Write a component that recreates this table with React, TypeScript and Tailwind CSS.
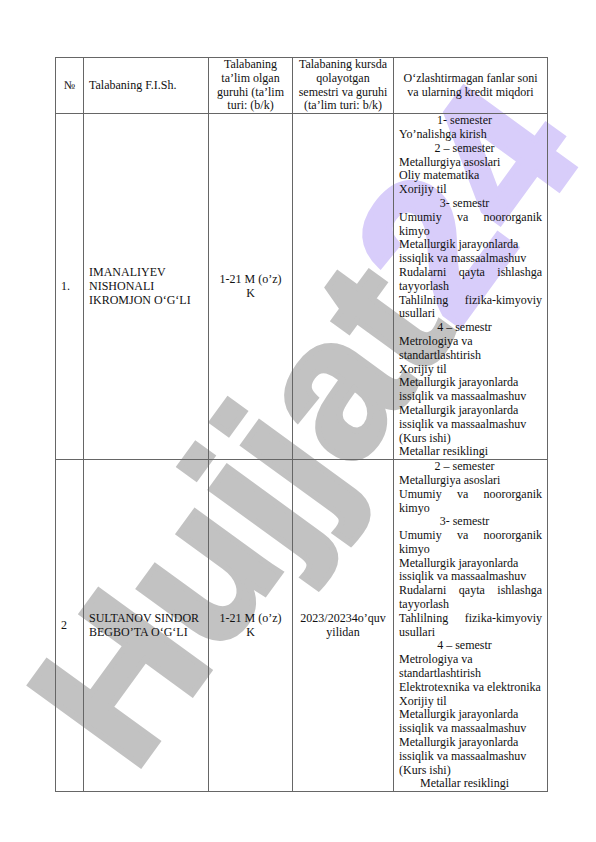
type Line = { t: string; k: "c" | "l" | "j" };

const row1: Line[] = [
  { t: "1- semester", k: "c" },
  { t: "Yo’nalishga kirish", k: "l" },
  { t: "2 – semester", k: "c" },
  { t: "Metallurgiya asoslari", k: "l" },
  { t: "Oliy matematika", k: "l" },
  { t: "Xorijiy til", k: "l" },
  { t: "3- semestr", k: "c" },
  { t: "Umumiy va noororganik", k: "j" },
  { t: "kimyo", k: "l" },
  { t: "Metallurgik jarayonlarda", k: "l" },
  { t: "issiqlik va massaalmashuv", k: "l" },
  { t: "Rudalarni qayta ishlashga", k: "j" },
  { t: "tayyorlash", k: "l" },
  { t: "Tahlilning fizika-kimyoviy", k: "j" },
  { t: "usullari", k: "l" },
  { t: "4 – semestr", k: "c" },
  { t: "Metrologiya va", k: "l" },
  { t: "standartlashtirish", k: "l" },
  { t: "Xorijiy til", k: "l" },
  { t: "Metallurgik jarayonlarda", k: "l" },
  { t: "issiqlik va massaalmashuv", k: "l" },
  { t: "Metallurgik jarayonlarda", k: "l" },
  { t: "issiqlik va massaalmashuv", k: "l" },
  { t: "(Kurs ishi)", k: "l" },
  { t: "Metallar resiklingi", k: "l" },
];

const row2: Line[] = [
  { t: "2 – semester", k: "c" },
  { t: "Metallurgiya asoslari", k: "l" },
  { t: "Umumiy va noororganik", k: "j" },
  { t: "kimyo", k: "l" },
  { t: "3- semestr", k: "c" },
  { t: "Umumiy va noororganik", k: "j" },
  { t: "kimyo", k: "l" },
  { t: "Metallurgik jarayonlarda", k: "l" },
  { t: "issiqlik va massaalmashuv", k: "l" },
  { t: "Rudalarni qayta ishlashga", k: "j" },
  { t: "tayyorlash", k: "l" },
  { t: "Tahlilning fizika-kimyoviy", k: "j" },
  { t: "usullari", k: "l" },
  { t: "4 – semestr", k: "c" },
  { t: "Metrologiya va", k: "l" },
  { t: "standartlashtirish", k: "l" },
  { t: "Elektrotexnika va elektronika", k: "l" },
  { t: "Xorijiy til", k: "l" },
  { t: "Metallurgik jarayonlarda", k: "l" },
  { t: "issiqlik va massaalmashuv", k: "l" },
  { t: "Metallurgik jarayonlarda", k: "l" },
  { t: "issiqlik va massaalmashuv", k: "l" },
  { t: "(Kurs ishi)", k: "l" },
  { t: "Metallar resiklingi", k: "c" },
];

const Subjects = ({ lines }: { lines: Line[] }) => (
  <div className="flex flex-col">
    {lines.map((l, i) =>
      l.k === "j" ? (
        <div key={i} className="flex justify-between whitespace-nowrap">
          {l.t.split(" ").map((w, j) => (
            <span key={j}>{w}</span>
          ))}
        </div>
      ) : (
        <div
          key={i}
          className={
            l.k === "c"
              ? "text-center pr-3 whitespace-nowrap"
              : "text-left whitespace-nowrap"
          }
        >
          {l.t}
        </div>
      )
    )}
  </div>
);

const cell = "border border-[#666] px-[5px] py-0 align-middle";

const App = () => {
  return (
    <div className="relative w-[596px] h-[842px] bg-white overflow-hidden">
      {/* watermark */}
      <div className="absolute left-[304px] top-[424px] -translate-x-1/2 -translate-y-1/2 -rotate-[54deg] whitespace-nowrap font-bold text-[198px] leading-none font-['Liberation_Sans',Arial,sans-serif] [-webkit-text-stroke:6px_currentColor] select-none pointer-events-none">
        <span className="text-[#c2c2c2]">Hujjat</span>
        <span className="text-[#d8cdfa]">24</span>
      </div>

      <div className="relative pt-[57px] pl-[55px] font-['Liberation_Serif','Times_New_Roman',serif] text-[12px] leading-[13.8px] text-[#111]">
        <table className="border-collapse table-fixed w-[492px]">
          <colgroup>
            <col className="w-[28px]" />
            <col className="w-[125px]" />
            <col className="w-[84px]" />
            <col className="w-[101px]" />
            <col className="w-[154px]" />
          </colgroup>
          <thead>
            <tr className="h-[56px]">
              <th className={`${cell} font-normal text-center`}>№</th>
              <th className={`${cell} font-normal text-left`}>
                Talabaning F.I.Sh.
              </th>
              <th className={`${cell} font-normal text-center whitespace-nowrap`}>
                Talabaning
                <br />
                ta’lim olgan
                <br />
                guruhi (ta’lim
                <br />
                turi: (b/k)
              </th>
              <th className={`${cell} font-normal text-center whitespace-nowrap`}>
                Talabaning kursda
                <br />
                qolayotgan
                <br />
                semestri va guruhi
                <br />
                (ta’lim turi: b/k)
              </th>
              <th className={`${cell} font-normal text-center whitespace-nowrap`}>
                O‘zlashtirmagan fanlar soni
                <br />
                va ularning kredit miqdori
              </th>
            </tr>
          </thead>
          <tbody>
            <tr>
              <td className={`${cell} text-left`}>1.</td>
              <td className={`${cell} text-left`}>
                IMANALIYEV
                <br />
                NISHONALI
                <br />
                IKROMJON O‘G‘LI
              </td>
              <td className={`${cell} text-center`}>
                1-21 M (o’z)
                <br />K
              </td>
              <td className={cell}></td>
              <td className={cell}>
                <Subjects lines={row1} />
              </td>
            </tr>
            <tr>
              <td className={`${cell} text-left`}>2</td>
              <td className={`${cell} text-left whitespace-nowrap`}>
                SULTANOV SINDOR
                <br />
                BEGBO’TA O‘G‘LI
              </td>
              <td className={`${cell} text-center`}>
                1-21 M (o’z)
                <br />K
              </td>
              <td className={`${cell} text-center`}>
                2023/20234o’quv
                <br />
                yilidan
              </td>
              <td className={cell}>
                <Subjects lines={row2} />
              </td>
            </tr>
          </tbody>
        </table>
      </div>
    </div>
  );
};

export default App;
